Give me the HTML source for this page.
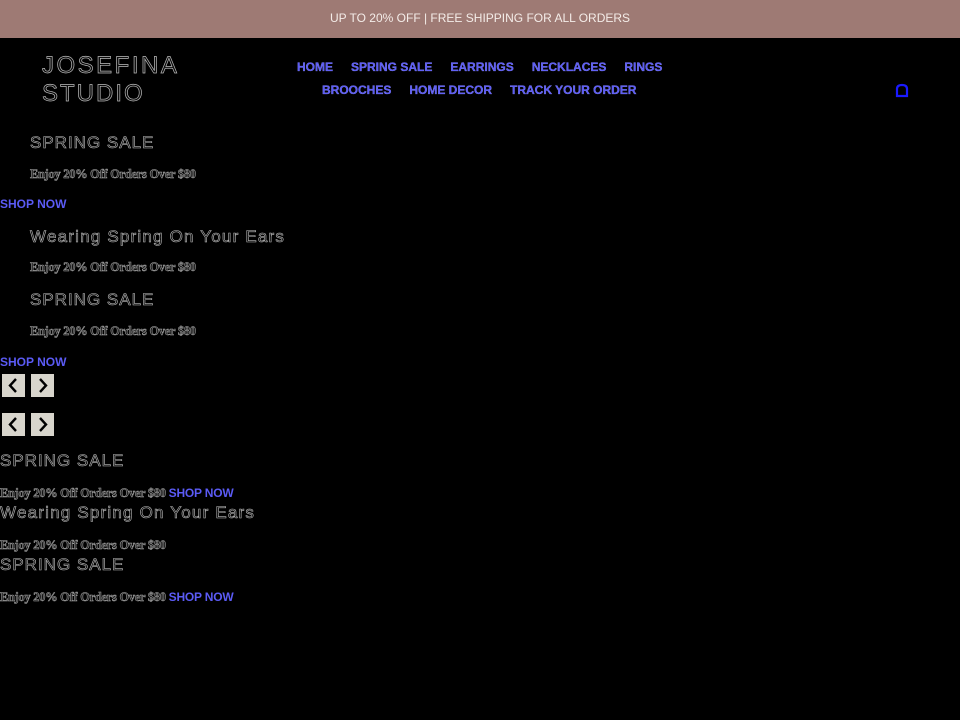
<!DOCTYPE html>
<html><head><meta charset="utf-8"><style>
html,body{margin:0;padding:0;width:960px;height:720px;background:#000;overflow:hidden;font-family:"Liberation Sans",sans-serif}
.a{position:absolute;white-space:nowrap;line-height:1}
.bar{position:absolute;left:0;top:0;width:960px;height:38px;background:#9e7a74;color:#f4ece8;font-size:12px;text-align:center;line-height:37px}
.logo{font-size:24px;letter-spacing:2.5px;color:#0a0a0a;-webkit-text-stroke:0.7px #bbb}
.nav{color:#5b5bf5;font-size:12px;font-weight:bold;-webkit-text-stroke:0.3px #8888ff}
.nav span{margin-right:18px}
.nav span:last-child{margin-right:0}
.h{font-size:17px;letter-spacing:1px;color:#0a0a0a;-webkit-text-stroke:0.6px #bbb}
.h2{font-size:17px;letter-spacing:1.2px;color:#0a0a0a;-webkit-text-stroke:0.6px #bbb}
.p{font-family:"Liberation Serif",serif;font-weight:bold;font-size:12.3px;color:#222;-webkit-text-stroke:0.5px #aaa;letter-spacing:-0.2px}
.s{color:#5b5bf5;font-size:12px;font-weight:bold}
.btn{position:absolute;width:23px;height:23px;background:#d8d5cc}
.btn svg{position:absolute;left:0;top:0}
</style></head><body>
<div class="bar">UP TO 20% OFF | FREE SHIPPING FOR ALL ORDERS</div>
<div class="a logo" style="left:42px;top:54px">JOSEFINA</div>
<div class="a logo" style="left:42px;top:82px;letter-spacing:2px">STUDIO</div>
<div class="a nav" style="left:297px;top:61px"><span>HOME</span><span>SPRING SALE</span><span>EARRINGS</span><span>NECKLACES</span><span>RINGS</span></div>
<div class="a nav" style="left:322px;top:84px"><span>BROOCHES</span><span>HOME DECOR</span><span>TRACK YOUR ORDER</span></div>
<svg class="a" style="left:895px;top:82px" width="14" height="16" viewBox="0 0 14 16"><path d="M2 14V7Q2 3 7 3Q12 3 12 7V14Z" fill="none" stroke="#1a1aff" stroke-width="2.2"/></svg>
<div class="a h" style="left:30px;top:134px">SPRING SALE</div>
<div class="a p" style="left:30px;top:168px">Enjoy 20% Off Orders Over $80</div>
<div class="a s" style="left:0;top:198px">SHOP NOW</div>
<div class="a h2" style="left:30px;top:228px">Wearing Spring On Your Ears</div>
<div class="a p" style="left:30px;top:261px">Enjoy 20% Off Orders Over $80</div>
<div class="a h" style="left:30px;top:291px">SPRING SALE</div>
<div class="a p" style="left:30px;top:325px">Enjoy 20% Off Orders Over $80</div>
<div class="a s" style="left:0;top:356px">SHOP NOW</div>
<div class="btn" style="left:2px;top:374px"><svg width="23" height="23"><path d="M14 5L8 11.5L14 18" fill="none" stroke="#000" stroke-width="2.4"/></svg></div>
<div class="btn" style="left:31px;top:374px"><svg width="23" height="23"><path d="M9 5L15 11.5L9 18" fill="none" stroke="#000" stroke-width="2.4"/></svg></div>
<div class="btn" style="left:2px;top:413px"><svg width="23" height="23"><path d="M14 5L8 11.5L14 18" fill="none" stroke="#000" stroke-width="2.4"/></svg></div>
<div class="btn" style="left:31px;top:413px"><svg width="23" height="23"><path d="M9 5L15 11.5L9 18" fill="none" stroke="#000" stroke-width="2.4"/></svg></div>
<div class="a h" style="left:0;top:452px">SPRING SALE</div>
<div class="a p" style="left:0;top:487px">Enjoy 20% Off Orders Over $80 <span class="s" style="font-family:'Liberation Sans',sans-serif;-webkit-text-stroke:0">SHOP NOW</span></div>
<div class="a h2" style="left:0;top:504px">Wearing Spring On Your Ears</div>
<div class="a p" style="left:0;top:539px">Enjoy 20% Off Orders Over $80</div>
<div class="a h" style="left:0;top:556px">SPRING SALE</div>
<div class="a p" style="left:0;top:591px">Enjoy 20% Off Orders Over $80 <span class="s" style="font-family:'Liberation Sans',sans-serif;-webkit-text-stroke:0">SHOP NOW</span></div>
</body></html>
